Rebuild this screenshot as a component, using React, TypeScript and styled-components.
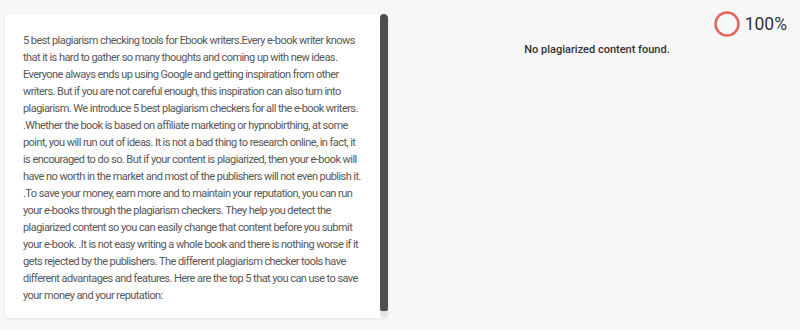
import React from 'react';
import styled, { createGlobalStyle } from 'styled-components';

const GlobalStyle = createGlobalStyle`
    html, body {
        margin: 0;
        padding: 0;
        background: #f7f7f7;
        font-family: Roboto, "Liberation Sans", sans-serif;
    }
`

const text = `5 best plagiarism checking tools for Ebook writers.Every e-book writer knows that it is hard to gather so many thoughts and coming up with new ideas. Everyone always ends up using Google and getting inspiration from other writers. But if you are not careful enough, this inspiration can also turn into plagiarism. We introduce 5 best plagiarism checkers for all the e-book writers. .Whether the book is based on affiliate marketing or hypnobirthing, at some point, you will run out of ideas. It is not a bad thing to research online, in fact, it is encouraged to do so. But if your content is plagiarized, then your e-book will have no worth in the market and most of the publishers will not even publish it. .To save your money, earn more and to maintain your reputation, you can run your e-books through the plagiarism checkers. They help you detect the plagiarized content so you can easily change that content before you submit your e-book. .It is not easy writing a whole book and there is nothing worse if it gets rejected by the publishers. The different plagiarism checker tools have different advantages and features. Here are the top 5 that you can use to save your money and your reputation:`

const App = () => {
    const score = 100

    return (
        <>
            <GlobalStyle />
            <Page>
                <TextCard>
                    <Content>{text}</Content>
                    <ScrollRail>
                        <ScrollThumb />
                    </ScrollRail>
                </TextCard>

                <Result>
                    <ScoreRow>
                        <ScoreRing>
                            <svg width="26" height="26" viewBox="0 0 26 26">
                                <circle cx="13" cy="13" r="11.5" fill="none" stroke="#e0655a" strokeWidth="2.5" />
                            </svg>
                        </ScoreRing>
                        <ScoreValue>{score}%</ScoreValue>
                    </ScoreRow>
                    <Message>No plagiarized content found.</Message>
                </Result>
            </Page>
        </>
    )
}

export default App

const Page = styled.div`
    display: flex;
    align-items: flex-start;
    padding: 14px 0 0 5px;
    height: 330px;
    box-sizing: border-box;
`

const TextCard = styled.div`
    display: flex;
    width: 383px;
    height: 304px;
    flex-shrink: 0;
    background: #fff;
    border-radius: 4px;
    box-shadow: 0 1px 3px rgba(0, 0, 0, .08);
    overflow: hidden;
`

const Content = styled.div`
    flex-grow: 1;
    padding: 18px 16px 0 18px;
    font-size: 11px;
    letter-spacing: -0.56px;
    line-height: 17px;
    color: #585858;
    overflow: hidden;
`

const ScrollRail = styled.div`
    width: 8px;
    flex-shrink: 0;
    background: #e4e4e4;
    border-radius: 4px;
    display: flex;
    flex-direction: column;
    padding-bottom: 7px;
`

const ScrollThumb = styled.div`
    flex-grow: 1;
    background: #4e4e4e;
    border-radius: 4px 4px 2px 2px;
`

const Result = styled.div`
    flex-grow: 1;
    display: flex;
    flex-direction: column;
    padding-left: 6px;
`

const ScoreRow = styled.div`
    display: flex;
    align-items: center;
    justify-content: flex-end;
    gap: 5px;
    margin-top: -3px;
    padding-right: 13px;
`

const ScoreRing = styled.div`
    display: flex;
`

const ScoreValue = styled.div`
    font-size: 17.5px;
    color: #333;
`

const Message = styled.div`
    text-align: center;
    font-size: 11px;
    font-weight: 500;
    color: #333;
    margin-top: 6px;
`
